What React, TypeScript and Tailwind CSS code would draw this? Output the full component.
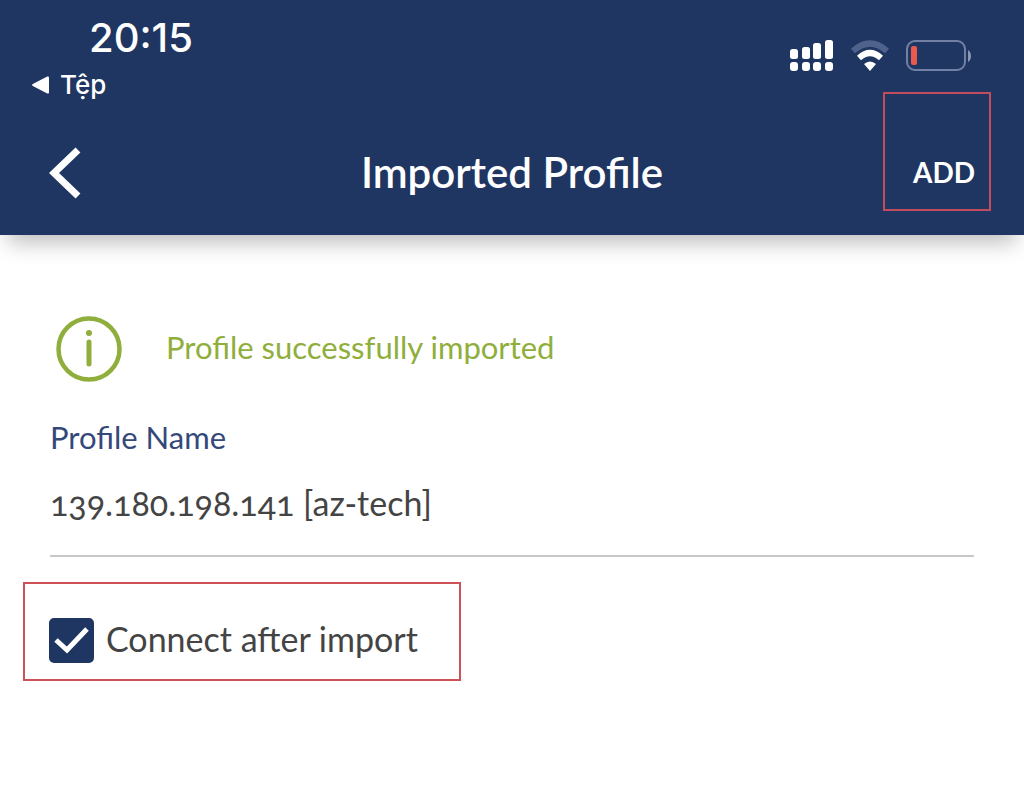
import { useState } from 'react';

const StatusBar = () => (
  <div className="flex justify-between pl-8 pr-[52px] pt-[18px] text-white font-['Inter',sans-serif]">
    <div>
      <div className="pl-[57px] text-[40px] leading-10 font-medium">20:15</div>
      <a href="#files" className="mt-[11px] flex items-center gap-[10px] text-[26px] leading-8 font-medium">
        <svg width="18" height="18" viewBox="0 0 18 18" fill="currentColor">
          <path d="M0.8 8.1 15.3 0.6Q17 0 17 1.8V16.2Q17 18 15.3 17.4L0.8 9.9Q-0.6 9 0.8 8.1Z" />
        </svg>
        Tệp
      </a>
    </div>

    <div className="mt-[22px] flex items-start gap-4">
      {/* Dual SIM signal */}
      <svg width="44" height="32" viewBox="0 0 44 32" fill="currentColor">
        <rect x="0" y="9" width="8" height="10" rx="2.5" />
        <rect x="12" y="7" width="8" height="12" rx="2.5" />
        <rect x="23" y="3" width="8" height="16" rx="2.5" />
        <rect x="35" y="0" width="8" height="19" rx="2.5" />
        <rect x="0" y="22" width="8" height="9" rx="3" />
        <rect x="12" y="22" width="8" height="9" rx="3" />
        <rect x="23" y="22" width="8" height="9" rx="3" />
        <rect x="35" y="22" width="8" height="9" rx="3" />
      </svg>

      {/* Wi-Fi */}
      <svg width="40" height="32" viewBox="0 0 40 32" fill="none">
        <path d="M3 11Q20 -4 37 11" stroke="#4f628b" strokeWidth="6" />
        <path d="M9 18Q20 8 31 18" stroke="currentColor" strokeWidth="6" />
        <path d="M14 24Q20 19 26 24L20 31Z" fill="currentColor" />
      </svg>

      {/* Battery */}
      <svg width="66" height="32" viewBox="0 0 66 32" fill="none">
        <rect x="1" y="1" width="58" height="29" rx="8" stroke="#7280a3" strokeWidth="2" />
        <rect x="5" y="6" width="6" height="19" rx="2" fill="#ea5a4c" />
        <path d="M62 10Q65 12 65 16T62 22Z" fill="#8b97b3" />
      </svg>
    </div>
  </div>
);

const Header = () => (
  <header className="relative bg-[#203662] text-white shadow-[0_16px_20px_-8px_rgba(0,0,0,0.25)]">
    <StatusBar />
    <div className="grid h-[134px] grid-cols-[1fr_auto_1fr] items-center px-[49px] pt-[10px]">
      <button type="button" aria-label="Back" className="justify-self-start">
        <svg width="32" height="52" viewBox="0 0 32 52" fill="none" stroke="currentColor" strokeWidth="7">
          <path d="M29 3 5 26 29 49" />
        </svg>
      </button>
      <h1 className="pb-[3px] text-[42px] leading-[48px] font-semibold">Imported Profile</h1>
      <button type="button" className="relative justify-self-end pb-[3px] text-[28px] leading-8 font-bold">
        ADD
        <span className="pointer-events-none absolute -top-[64px] -right-4 -bottom-[20px] -left-[30px] border-2 border-[#c24c5c]" />
      </button>
    </div>
  </header>
);

export default function App() {
  const [name, setName] = useState('139.180.198.141 [az-tech]');
  const [connect, setConnect] = useState(true);

  return (
    <div className="min-h-screen bg-white font-['Lato',sans-serif] text-[#444]">
      <Header />

      <main className="pt-[80px]">
        <div className="flex items-center gap-11 px-[55px] text-[#8fae3c]">
          <svg width="67" height="67" viewBox="0 0 67 67" fill="none" stroke="currentColor">
            <circle cx="34" cy="34" r="30.5" strokeWidth="4.5" />
            <circle cx="34" cy="18" r="3" fill="currentColor" stroke="none" />
            <path d="M34 27V49" strokeWidth="5" strokeLinecap="round" />
          </svg>
          <p className="pb-[3px] text-[31px] leading-9">Profile successfully imported</p>
        </div>

        <div className="mt-[37px] px-[50px]">
          <label htmlFor="profile-name" className="block text-[31px] leading-9 text-[#34497a]">
            Profile Name
          </label>
          <input
            id="profile-name"
            type="text"
            value={name}
            onChange={(e) => setName(e.target.value)}
            className="mt-[17px] block h-[85px] w-full border-b-2 border-[#c8c8c8] pb-[22px] text-[34px] oldstyle-nums outline-none"
          />
        </div>

        <div className="mt-[25px] ml-[23px] flex w-[438px] items-center border-2 border-[#cd5157] pt-[34px] pb-4 pl-6">
          <label className="flex items-center gap-3 text-[34px] leading-[42px]">
            <span className="grid size-[45px] place-items-center">
              <input
                type="checkbox"
                checked={connect}
                onChange={(e) => setConnect(e.target.checked)}
                className="peer col-start-1 row-start-1 size-[45px] appearance-none rounded-[5px] border-2 border-[#203662] checked:bg-[#203662]"
              />
              <svg
                className="pointer-events-none col-start-1 row-start-1 hidden peer-checked:block"
                width="45"
                height="45"
                viewBox="0 0 45 45"
                fill="none"
                stroke="#fff"
                strokeWidth="5"
              >
                <path d="M7 22 18 32 38 11" />
              </svg>
            </span>
            <span className="pb-[3px]">Connect after import</span>
          </label>
        </div>
      </main>
    </div>
  );
}
